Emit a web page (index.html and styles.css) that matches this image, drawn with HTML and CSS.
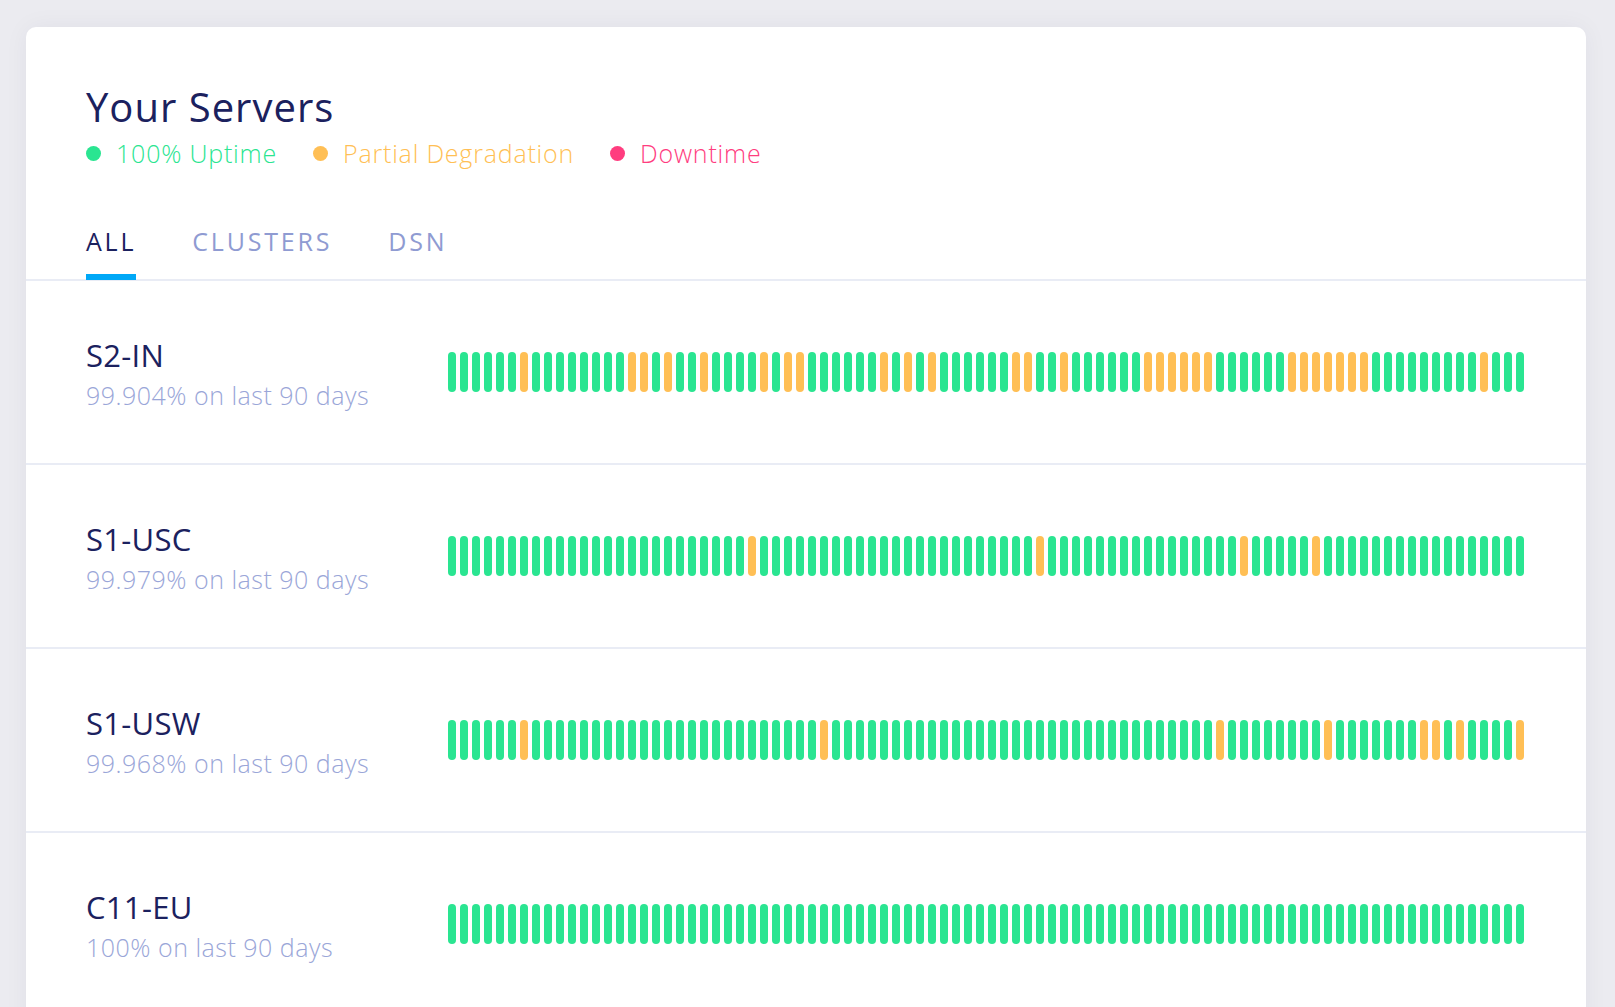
FILE: index.html
```html
<!DOCTYPE html>
<html lang="en">
<head>
<meta charset="utf-8">
<title>Your Servers</title>
<link rel="stylesheet" href="styles.css">
</head>
<body>
<div class="page">
  <section class="card">
    <header class="head">
      <h1 class="title">Your Servers</h1>
      <ul class="legend">
        <li class="legend-item up"><span class="dot"></span>100% Uptime</li>
        <li class="legend-item partial"><span class="dot"></span>Partial Degradation</li>
        <li class="legend-item down"><span class="dot"></span>Downtime</li>
      </ul>
    </header>
    <nav class="tabs">
      <a class="tab active">ALL</a>
      <a class="tab">CLUSTERS</a>
      <a class="tab">DSN</a>
    </nav>

    <div class="row">
      <div class="info">
        <div class="name">S2-IN</div>
        <div class="sub">99.904% on last 90 days</div>
      </div>
      <div class="bars">
        <i></i><i></i><i></i><i></i><i></i><i></i><i class="o"></i><i></i><i></i><i></i>
        <i></i><i></i><i></i><i></i><i></i><i class="o"></i><i class="o"></i><i></i><i class="o"></i><i></i>
        <i></i><i class="o"></i><i></i><i></i><i></i><i></i><i class="o"></i><i></i><i class="o"></i><i class="o"></i>
        <i></i><i></i><i></i><i></i><i></i><i></i><i class="o"></i><i></i><i class="o"></i><i></i>
        <i class="o"></i><i></i><i></i><i></i><i></i><i></i><i></i><i class="o"></i><i class="o"></i><i></i>
        <i></i><i class="o"></i><i></i><i></i><i></i><i></i><i></i><i></i><i class="o"></i><i class="o"></i>
        <i class="o"></i><i class="o"></i><i class="o"></i><i class="o"></i><i></i><i></i><i></i><i></i><i></i><i></i>
        <i class="o"></i><i class="o"></i><i class="o"></i><i class="o"></i><i class="o"></i><i class="o"></i><i class="o"></i><i></i><i></i><i></i>
        <i></i><i></i><i></i><i></i><i></i><i></i><i class="o"></i><i></i><i></i><i></i>
      </div>
    </div>

    <div class="row">
      <div class="info">
        <div class="name">S1-USC</div>
        <div class="sub">99.979% on last 90 days</div>
      </div>
      <div class="bars">
        <i></i><i></i><i></i><i></i><i></i><i></i><i></i><i></i><i></i><i></i>
        <i></i><i></i><i></i><i></i><i></i><i></i><i></i><i></i><i></i><i></i>
        <i></i><i></i><i></i><i></i><i></i><i class="o"></i><i></i><i></i><i></i><i></i>
        <i></i><i></i><i></i><i></i><i></i><i></i><i></i><i></i><i></i><i></i>
        <i></i><i></i><i></i><i></i><i></i><i></i><i></i><i></i><i></i><i class="o"></i>
        <i></i><i></i><i></i><i></i><i></i><i></i><i></i><i></i><i></i><i></i>
        <i></i><i></i><i></i><i></i><i></i><i></i><i class="o"></i><i></i><i></i><i></i>
        <i></i><i></i><i class="o"></i><i></i><i></i><i></i><i></i><i></i><i></i><i></i>
        <i></i><i></i><i></i><i></i><i></i><i></i><i></i><i></i><i></i><i></i>
      </div>
    </div>

    <div class="row">
      <div class="info">
        <div class="name">S1-USW</div>
        <div class="sub">99.968% on last 90 days</div>
      </div>
      <div class="bars">
        <i></i><i></i><i></i><i></i><i></i><i></i><i class="o"></i><i></i><i></i><i></i>
        <i></i><i></i><i></i><i></i><i></i><i></i><i></i><i></i><i></i><i></i>
        <i></i><i></i><i></i><i></i><i></i><i></i><i></i><i></i><i></i><i></i>
        <i></i><i class="o"></i><i></i><i></i><i></i><i></i><i></i><i></i><i></i><i></i>
        <i></i><i></i><i></i><i></i><i></i><i></i><i></i><i></i><i></i><i></i>
        <i></i><i></i><i></i><i></i><i></i><i></i><i></i><i></i><i></i><i></i>
        <i></i><i></i><i></i><i></i><i class="o"></i><i></i><i></i><i></i><i></i><i></i>
        <i></i><i></i><i></i><i class="o"></i><i></i><i></i><i></i><i></i><i></i><i></i>
        <i></i><i class="o"></i><i class="o"></i><i></i><i class="o"></i><i></i><i></i><i></i><i></i><i class="o"></i>
      </div>
    </div>

    <div class="row">
      <div class="info">
        <div class="name">C11-EU</div>
        <div class="sub">100% on last 90 days</div>
      </div>
      <div class="bars">
        <i></i><i></i><i></i><i></i><i></i><i></i><i></i><i></i><i></i><i></i>
        <i></i><i></i><i></i><i></i><i></i><i></i><i></i><i></i><i></i><i></i>
        <i></i><i></i><i></i><i></i><i></i><i></i><i></i><i></i><i></i><i></i>
        <i></i><i></i><i></i><i></i><i></i><i></i><i></i><i></i><i></i><i></i>
        <i></i><i></i><i></i><i></i><i></i><i></i><i></i><i></i><i></i><i></i>
        <i></i><i></i><i></i><i></i><i></i><i></i><i></i><i></i><i></i><i></i>
        <i></i><i></i><i></i><i></i><i></i><i></i><i></i><i></i><i></i><i></i>
        <i></i><i></i><i></i><i></i><i></i><i></i><i></i><i></i><i></i><i></i>
        <i></i><i></i><i></i><i></i><i></i><i></i><i></i><i></i><i></i><i></i>
      </div>
    </div>
  </section>
</div>
</body>
</html>
```
FILE: styles.css
```css
html, body {
  margin: 0;
  padding: 0;
}
body {
  background: #ebebf0;
  font-family: "Open Sans", "Noto Sans", "Liberation Sans", sans-serif;
  color: #1b215e;
  height: 1007px;
  overflow: hidden;
}
.page {
  padding: 27px 29px 0 26px;
}
.card {
  background: #ffffff;
  border-radius: 10px 10px 0 0;
  box-shadow: 0 0 24px rgba(40, 40, 80, 0.05);
  height: 1000px;
}
.head {
  padding: 56px 60px 0;
}
.title {
  margin: 0;
  font-size: 40px;
  line-height: 48px;
  font-weight: 400;
  letter-spacing: 1px;
  color: #1b215e;
}
.legend {
  list-style: none;
  margin: 7px 0 0;
  padding: 0;
  display: flex;
  gap: 36px;
}
.legend-item {
  display: flex;
  align-items: center;
  gap: 15px;
  font-size: 25px;
  line-height: 30px;
  letter-spacing: 0.8px;
  font-weight: 300;
}
.dot {
  width: 15px;
  height: 15px;
  border-radius: 50%;
  background: currentColor;
}
.up { color: #2ae591; }
.partial { color: #ffbf55; }
.down { color: #ff3d7f; }

.tabs {
  display: flex;
  gap: 56px;
  padding: 0 60px;
  margin-top: 58px;
  border-bottom: 2px solid #e9ecf5;
}
.tab {
  font-size: 25px;
  line-height: 30px;
  letter-spacing: 2.8px;
  color: #8f9bd2;
  padding-bottom: 18px;
  border-bottom: 6px solid transparent;
  margin-bottom: -1px;
}
.tab.active {
  color: #1b215e;
  border-bottom-color: #00a8f7;
}

.row {
  display: flex;
  align-items: center;
  height: 182px;
  padding: 0 60px;
  border-bottom: 2px solid #e9ecf5;
}
.info {
  width: 362px;
  flex: none;
  padding-top: 2px;
}
.name {
  font-size: 31px;
  line-height: 36px;
  letter-spacing: 0.3px;
  color: #1b215e;
}
.sub {
  margin-top: 7px;
  font-size: 25px;
  line-height: 30px;
  letter-spacing: 0.5px;
  font-weight: 300;
  color: #9aa6d8;
}
.bars {
  display: flex;
  gap: 4px;
}
.bars i {
  width: 8px;
  height: 40px;
  border-radius: 4px;
  background: #2ae591;
}
.bars i.o {
  background: #ffbf55;
}
```
